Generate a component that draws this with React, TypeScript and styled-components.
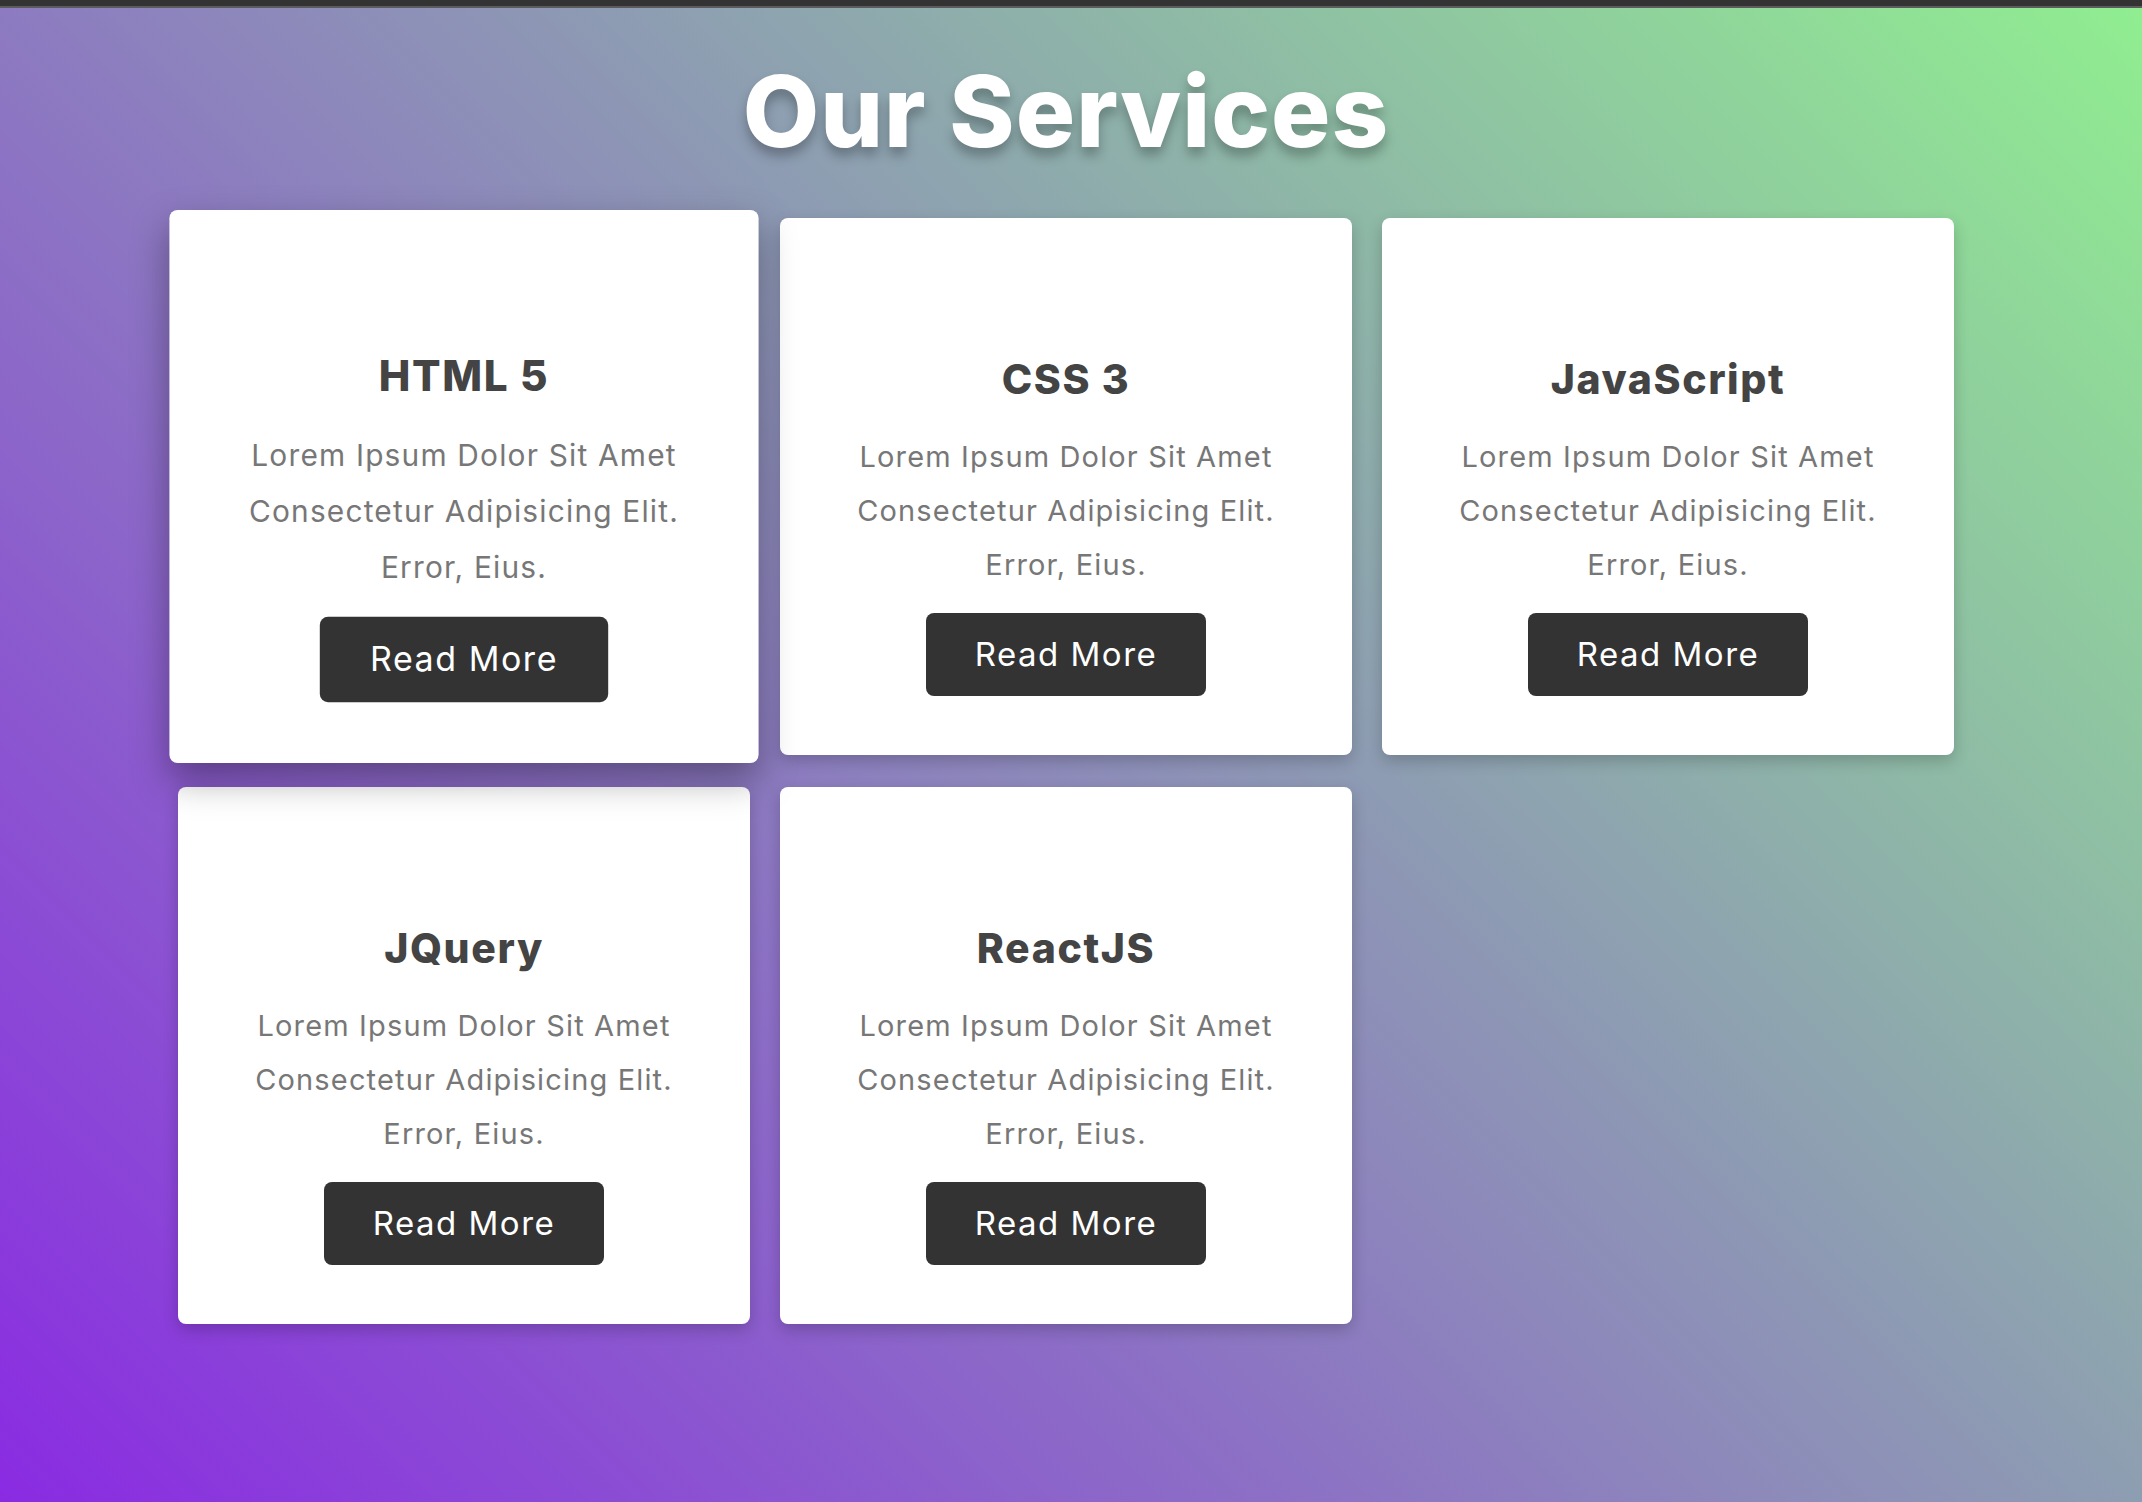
import React from "react";
import styled, { createGlobalStyle } from "styled-components";

const GlobalStyle = createGlobalStyle`
  *, *::before, *::after { box-sizing: border-box; }
  html, body { margin: 0; padding: 0; }
  body { font-family: Inter, "Noto Sans", Arial, sans-serif; }
`;

const Page = styled.div`
  min-height: 100vh;
  background: linear-gradient(45deg, #8a2be2, #90ee90);
  display: flex;
  flex-direction: column;
`;

const TopBar = styled.div`
  height: 8px;
  background: #333333;
  border-bottom: 2px solid #5c5c5e;
`;

const Section = styled.section`
  display: flex;
  flex-direction: column;
  align-items: center;
  padding: 0 10px 60px 0;
`;

const Title = styled.h1`
  margin: 44px 0 47px;
  font-family: Inter, "Noto Sans", sans-serif;
  font-weight: 800;
  font-size: 99px;
  line-height: 119px;
  color: #ffffff;
  text-shadow: 0 8px 12px rgba(0, 0, 0, 0.28);
  letter-spacing: 1px;
`;

const Grid = styled.div`
  display: grid;
  grid-template-columns: repeat(3, 572px);
  column-gap: 30px;
  row-gap: 32px;
`;

const Card = styled.div<{ $active?: boolean }>`
  background: #ffffff;
  border-radius: 8px;
  display: flex;
  flex-direction: column;
  align-items: center;
  text-align: center;
  padding: 136px 60px 59px;
  box-shadow: ${(p) =>
    p.$active ? "0 16px 36px rgba(0, 0, 0, 0.35)" : "0 6px 16px rgba(0, 0, 0, 0.2)"};
  transform: ${(p) => (p.$active ? "scale(1.03)" : "none")};
`;

const CardTitle = styled.h3`
  margin: 0;
  font-family: Inter, "Noto Sans", sans-serif;
  font-weight: 800;
  font-size: 41px;
  line-height: 50px;
  letter-spacing: 1.6px;
  color: #444444;
`;

const CardText = styled.p`
  margin: 26px 0 21px;
  font-family: Inter, "Noto Sans", sans-serif;
  font-weight: 400;
  font-size: 29px;
  line-height: 54px;
  letter-spacing: 1.15px;
  color: #777777;
`;

const ReadMore = styled.button`
  border: none;
  border-radius: 8px;
  background: #333333;
  color: #ffffff;
  font-family: Inter, "Noto Sans", sans-serif;
  font-weight: 400;
  font-size: 33px;
  line-height: 43px;
  letter-spacing: 1.5px;
  padding: 20px 49px;
  cursor: pointer;
`;

const services = ["HTML 5", "CSS 3", "JavaScript", "JQuery", "ReactJS"];

export default function App() {
  return (
    <>
      <GlobalStyle />
      <Page>
        <TopBar />
        <Section>
          <Title>Our Services</Title>
          <Grid>
            {services.map((s, i) => (
              <Card key={s} $active={i === 0}>
                <CardTitle>{s}</CardTitle>
                <CardText>
                  Lorem Ipsum Dolor Sit Amet Consectetur Adipisicing Elit. Error, Eius.
                </CardText>
                <ReadMore>Read More</ReadMore>
              </Card>
            ))}
          </Grid>
        </Section>
      </Page>
    </>
  );
}
